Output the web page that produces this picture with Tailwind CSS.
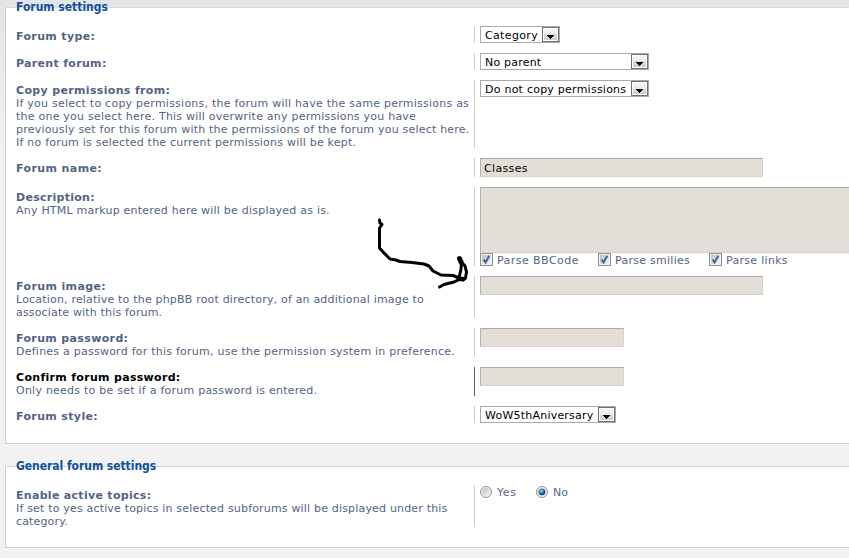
<!DOCTYPE html>
<html lang="en">
<head>
    <meta charset="UTF-8">
    <meta name="viewport" content="width=device-width, initial-scale=1.0">
    <title>Forum settings</title>
    <script src="https://cdn.jsdelivr.net/npm/@tailwindcss/browser@4"></script>
</head>
<body class="relative w-[849px] h-[558px] overflow-hidden bg-[#f2f2f2] bg-linear-to-b from-[#e3e4e8] from-0% to-[#f2f2f2] to-[150px] font-['DejaVu_Sans',Verdana,sans-serif] text-[11px] leading-[13px] text-[#536482] whitespace-nowrap">
    <!-- shared icons -->
    <svg class="absolute size-0">
        <defs>
            <linearGradient id="btn" x1="0" y1="0" x2="0" y2="1">
                <stop offset="0" stop-color="#f6f6f6"/><stop offset=".5" stop-color="#ebebeb"/><stop offset=".5" stop-color="#dadada"/><stop offset="1" stop-color="#cecece"/>
            </linearGradient>
            <linearGradient id="box" x1="0" y1="0" x2="1" y2="1">
                <stop offset="0" stop-color="#b9bfca"/><stop offset="1" stop-color="#f4f4f6"/>
            </linearGradient>
            <radialGradient id="dot" cx=".4" cy=".35" r=".65">
                <stop offset="0" stop-color="#8fe0f8"/><stop offset=".45" stop-color="#2a8fc0"/><stop offset="1" stop-color="#0b2f52"/>
            </radialGradient>
        </defs>
        <symbol id="drop" viewBox="0 0 17 15">
            <rect x=".5" y=".5" width="16" height="14" fill="#fff" stroke="#707070"/>
            <rect x="2" y="2" width="13" height="11" fill="url(#btn)"/>
            <path d="M5 8h7v1h-1v1h-1v1H9v1H8v-1H7v-1H6V9H5z" fill="#000"/>
        </symbol>
        <symbol id="check" viewBox="0 0 13 13">
            <rect x=".5" y=".5" width="12" height="12" fill="#f4f4f4" stroke="#8e8f8f"/>
            <rect x="2" y="2" width="9" height="9" fill="url(#box)"/>
            <path d="M3.6 6.6L5.6 9.4L9.2 2.8" fill="none" stroke="#4a5f97" stroke-width="2"/>
        </symbol>
        <symbol id="radio" viewBox="0 0 12 12">
            <circle cx="6" cy="6" r="5.5" fill="#f4f4f4" stroke="#8e8f8f"/>
            <circle cx="6" cy="6" r="3.9" fill="url(#box)"/>
        </symbol>
    </svg>

    <section class="relative mt-[7px] ml-[5px] h-[437px] w-[860px] border border-[#cccccc] border-t-[#d7d7d7] bg-white pl-[10px] pt-[18px]">
        <h2 class="absolute left-[10px] -top-[9px] font-['DejaVu_Sans_Condensed',Tahoma,sans-serif] text-xs leading-4 font-bold text-[#115098]"><span>Forum settings</span></h2>
        <div class="flex flex-col gap-[10px]">
            <dl class="flex h-[17px]">
                <dt class="w-[458px] shrink-0 pt-1 font-bold tracking-[0.36px]">Forum type:</dt>
                <dd class="border-l border-[#cccccc] pl-[5px]">
                    <div class="flex h-[17px] w-[80px] justify-between border border-[#a9a9b0] bg-white pl-1 leading-[17px] text-black"><span class="tracking-[0.35px]">Category</span><svg class="h-[15px] w-[17px]"><use href="#drop"/></svg></div>
                </dd>
            </dl>
            <dl class="flex h-[17px]">
                <dt class="w-[458px] shrink-0 pt-1 font-bold tracking-[0.32px]">Parent forum:</dt>
                <dd class="border-l border-[#cccccc] pl-[5px]">
                    <div class="flex h-[17px] w-[169px] justify-between border border-[#a9a9b0] bg-white pl-1 leading-[17px] text-black"><span class="tracking-[0.2px]">No parent</span><svg class="h-[15px] w-[17px]"><use href="#drop"/></svg></div>
                </dd>
            </dl>
            <dl class="flex h-[68px]">
                <dt class="w-[458px] shrink-0 pt-1"><b class="tracking-[0.34px]">Copy permissions from:</b><br>
                    <span class="tracking-[0.24px]">If you select to copy permissions, the forum will have the same permissions as</span><br>
                    <span class="tracking-[0.23px]">the one you select here. This will overwrite any permissions you have</span><br>
                    <span class="tracking-[0.21px]">previously set for this forum with the permissions of the forum you select here.</span><br>
                    <span class="tracking-[0.22px]">If no forum is selected the current permissions will be kept.</span></dt>
                <dd class="border-l border-[#cccccc] pl-[5px]">
                    <div class="flex h-[17px] w-[169px] justify-between border border-[#a9a9b0] bg-white pl-1 leading-[17px] text-black"><span class="tracking-[0.24px]">Do not copy permissions</span><svg class="h-[15px] w-[17px]"><use href="#drop"/></svg></div>
                </dd>
            </dl>
            <dl class="flex h-[19px]">
                <dt class="w-[458px] shrink-0 pt-1 font-bold tracking-[0.4px]">Forum name:</dt>
                <dd class="border-l border-[#cccccc] pl-[5px]">
                    <div class="h-[19px] w-[283px] border border-[#d5d3c5] border-t-[#abaaa8] border-l-[#b2b1ab] bg-[#e3dfd8] pl-[3px] pt-[3px] tracking-[0.35px] text-black">Classes</div>
                </dd>
            </dl>
            <dl class="flex h-[79px]">
                <dt class="w-[458px] shrink-0 pt-1"><b class="tracking-[0.28px]">Description:</b><br><span class="tracking-[0.22px]">Any HTML markup entered here will be displayed as is.</span></dt>
                <dd class="border-l border-[#cccccc] pl-[5px]">
                    <div class="h-[66px] w-[400px] border border-[#d5d3c5] border-t-[#abaaa8] border-l-[#b2b1ab] bg-[#e3dfd8]"></div>
                    <div class="flex leading-[15px]">
                        <label class="flex w-[118px] gap-1"><svg class="size-[13px]"><use href="#check"/></svg><span class="tracking-[0.45px]">Parse BBCode</span></label>
                        <label class="flex w-[111px] gap-1"><svg class="size-[13px]"><use href="#check"/></svg><span class="tracking-[0.27px]">Parse smilies</span></label>
                        <label class="flex gap-1"><svg class="size-[13px]"><use href="#check"/></svg><span class="tracking-[0.3px]">Parse links</span></label>
                    </div>
                </dd>
            </dl>
            <dl class="flex h-[42px]">
                <dt class="w-[458px] shrink-0 pt-1"><b class="tracking-[0.38px]">Forum image:</b><br>
                    <span class="tracking-[0.19px]">Location, relative to the phpBB root directory, of an additional image to</span><br>
                    <span class="tracking-[0.16px]">associate with this forum.</span></dt>
                <dd class="border-l border-[#cccccc] pl-[5px]">
                    <div class="h-[19px] w-[283px] border border-[#d5d3c5] border-t-[#abaaa8] border-l-[#b2b1ab] bg-[#e3dfd8]"></div>
                </dd>
            </dl>
            <dl class="flex h-[29px]">
                <dt class="w-[458px] shrink-0 pt-1"><b class="tracking-[0.36px]">Forum password:</b><br><span class="tracking-[0.24px]">Defines a password for this forum, use the permission system in preference.</span></dt>
                <dd class="border-l border-[#cccccc] pl-[5px]">
                    <div class="h-[19px] w-[144px] border border-[#d5d3c5] border-t-[#abaaa8] border-l-[#b2b1ab] bg-[#e3dfd8]"></div>
                </dd>
            </dl>
            <dl class="flex h-[29px]">
                <dt class="w-[458px] shrink-0 pt-1"><b class="tracking-[0.31px] text-black">Confirm forum password:</b><br><span class="tracking-[0.24px]">Only needs to be set if a forum password is entered.</span></dt>
                <dd class="border-l border-[#606060] pl-[5px]">
                    <div class="h-[19px] w-[144px] border border-[#d5d3c5] border-t-[#abaaa8] border-l-[#b2b1ab] bg-[#e3dfd8]"></div>
                </dd>
            </dl>
            <dl class="flex h-[17px]">
                <dt class="w-[458px] shrink-0 pt-1 font-bold tracking-[0.36px]">Forum style:</dt>
                <dd class="border-l border-[#cccccc] pl-[5px]">
                    <div class="flex h-[17px] w-[136px] justify-between border border-[#a9a9b0] bg-white pl-1 leading-[17px] text-black"><span class="tracking-[0.22px]">WoW5thAniversary</span><svg class="h-[15px] w-[17px]"><use href="#drop"/></svg></div>
                </dd>
            </dl>
        </div>
    </section>

    <section class="relative mt-[22px] ml-[5px] h-[82px] w-[860px] border border-[#cccccc] border-t-[#d7d7d7] bg-white pl-[10px] pt-[18px]">
        <h2 class="absolute left-[10px] -top-[9px] font-['DejaVu_Sans_Condensed',Tahoma,sans-serif] text-xs leading-4 font-bold text-[#115098]"><span class="tracking-[-0.04px]">General forum settings</span></h2>
        <dl class="flex h-[42px]">
            <dt class="w-[458px] shrink-0 pt-1"><b class="tracking-[0.3px]">Enable active topics:</b><br>
                <span class="tracking-[0.18px]">If set to yes active topics in selected subforums will be displayed under this</span><br>
                <span class="tracking-[0.15px]">category.</span></dt>
            <dd class="flex border-l border-[#cccccc] pl-[5px] pt-px">
                <label class="flex w-[56px] gap-[5px]"><svg class="size-3"><use href="#radio"/></svg><span class="tracking-[0.6px]">Yes</span></label>
                <label class="flex gap-[5px]"><svg class="size-3"><use href="#radio"/><circle cx="6" cy="6" r="3.3" fill="url(#dot)"/></svg><span>No</span></label>
            </dd>
        </dl>
    </section>

    <!-- hand drawn arrow -->
    <svg class="absolute left-[370px] top-[210px] h-[90px] w-[110px]" viewBox="370 210 110 90" fill="none" stroke="#000" stroke-width="3" stroke-linecap="round" stroke-linejoin="round">
        <path d="M379.500 220L380 223L382 224.500L379.500 228V248L384 253L390 259L396 260L400 261.500L412 262.500L424 264L429 266L433 271L441 275L453 275.500L459 278"/>
        <path d="M439.500 287L444 284.500L454 282L460 279"/>
        <path d="M461.500 262L465 266L466.500 272L465.500 278L463 280"/>
        <path d="M461.500 262L461 269L459 278"/>
        <path d="M459.500 258.500L461 262" stroke-width="5"/>
        <path d="M459 279L463 279" stroke-width="4.500"/>
    </svg>
</body>
</html>
